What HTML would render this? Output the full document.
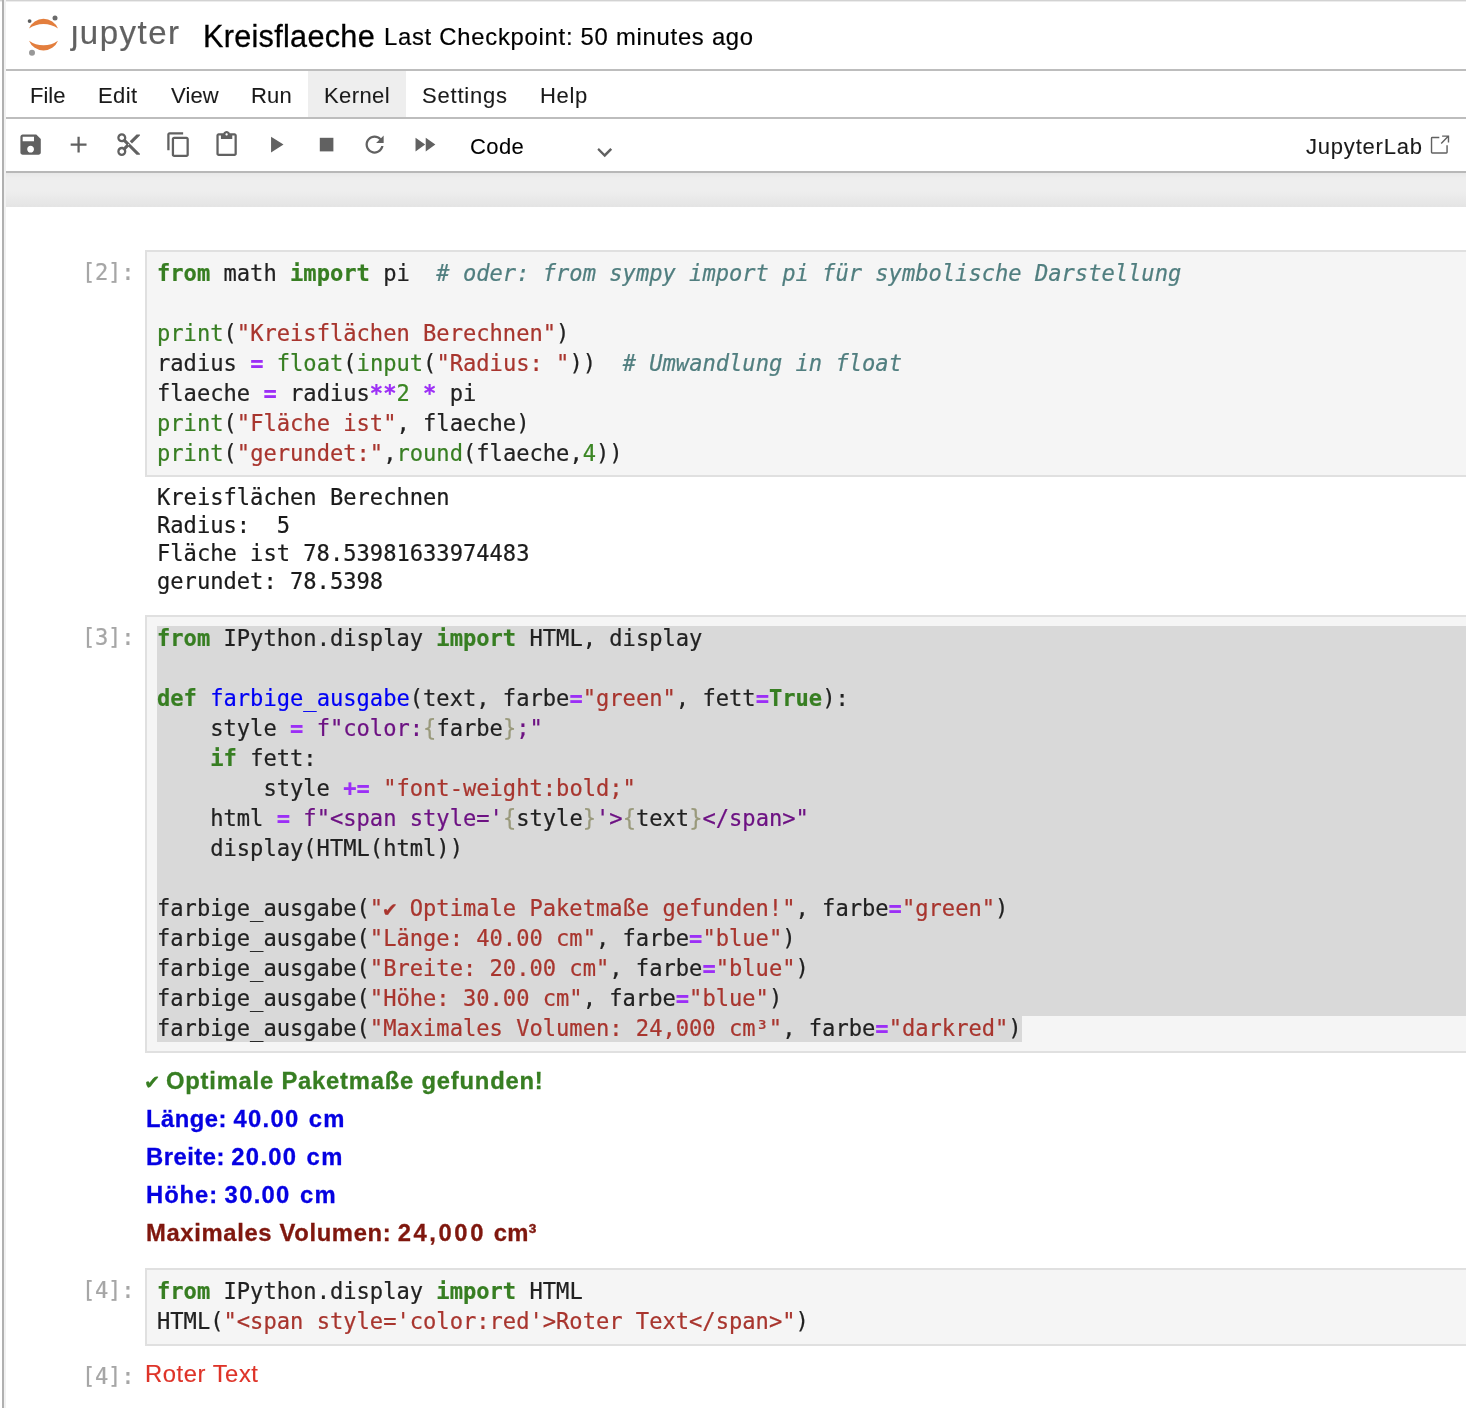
<!DOCTYPE html>
<html lang="de">
<head>
<meta charset="utf-8">
<title>Kreisflaeche</title>
<style>
html,body{margin:0;padding:0;background:#fff;}
body{width:1466px;height:1408px;position:relative;overflow:hidden;font-family:"Liberation Sans",sans-serif;color:#212121;}
.abs{position:absolute;white-space:nowrap;}
.abs,pre,.html{will-change:transform;}
.ui{-webkit-text-stroke:0.1px currentColor;font-family:"Liberation Sans",sans-serif;font-size:22px;line-height:26px;color:#1a1a1a;}
.hline{position:absolute;left:6px;right:0;height:2px;background:#bdbdbd;}
.ico{position:absolute;width:27.2px;height:27.2px;fill:#616161;}
pre{-webkit-text-stroke:0.22px currentColor;margin:0;font-family:"DejaVu Sans Mono","Liberation Mono",monospace;font-size:22.1px;}
.cell{position:absolute;left:145px;right:-4px;background:#f5f5f5;border:2px solid #e0e0e0;box-sizing:border-box;}
.code{position:absolute;left:157.3px;line-height:30px;color:#212121;white-space:pre;}
.out{position:absolute;left:157.3px;line-height:28px;color:#1a1a1a;white-space:pre;}
.prompt{position:absolute;left:81.8px;line-height:30px;color:#a6a6a6;white-space:pre;letter-spacing:-0.25px;margin-top:-0.8px;}
.k{color:#377e22;font-weight:bold;}
.b{color:#377e22;}
.s{color:#a8352e;}
.c{color:#507e7f;font-style:italic;}
.o{color:#9c2ff6;font-weight:bold;}
.n{color:#3b8624;}
.d{color:#0000f5;}
.f{color:#6d1283;}
.br{color:#99997b;}
.sel{position:absolute;background:#d9d9d9;}
.html{-webkit-text-stroke:0.3px currentColor;position:absolute;left:145.6px;margin-top:1px;font-size:23.8px;line-height:38px;font-weight:bold;letter-spacing:0.95px;}
</style>
</head>
<body>
<!-- window edges -->
<div class="abs" style="left:0;top:0;width:1466px;height:1px;background:#d2d2d2;"></div>
<div class="abs" style="left:0;top:1px;width:1466px;height:1px;background:#ececec;"></div>
<div class="abs" style="left:2px;top:0;width:2px;height:1408px;background:#b0b0b0;"></div>
<div class="abs" style="left:4px;top:0;width:2px;height:1408px;background:#f1f1f1;"></div>

<!-- header -->
<svg class="abs" style="left:0;top:0;" width="70" height="64" viewBox="0 0 70 64">
  <path d="M29 28.5 A15.63 15.63 0 0 1 58 28.5 A25.15 25.15 0 0 0 29 28.5 Z" fill="#e37e3d"/>
  <path d="M29 40.7 A15.63 15.63 0 0 0 58 40.7 A25.15 25.15 0 0 1 29 40.7 Z" fill="#e37e3d"/>
  <circle cx="29.6" cy="21.1" r="1.9" fill="#5e5e5e"/>
  <circle cx="55" cy="17.9" r="2.5" fill="#6b6b6b"/>
  <circle cx="32" cy="52.8" r="3" fill="#989898"/>
</svg>
<div class="abs" id="logo" style="left:70.5px;top:12.5px;font-size:33px;line-height:40px;color:#616161;letter-spacing:1.5px;-webkit-text-stroke:0.2px #616161;">jupyter</div>
<div class="abs" style="left:70px;top:17px;width:8px;height:7.5px;background:#fff;"></div>
<div class="abs" id="title" style="left:203px;top:18px;font-size:30.6px;line-height:36px;color:#000;letter-spacing:0.3px;-webkit-text-stroke:0.3px #000;">Kreisflaeche</div>
<div class="abs" id="chk" style="left:383.7px;top:21.5px;font-size:23.8px;line-height:30px;color:#000;letter-spacing:0.75px;-webkit-text-stroke:0.2px #000;">Last Checkpoint: 50 minutes ago</div>
<div class="hline" style="top:69px;"></div>

<!-- menu -->
<div class="abs" style="left:308px;top:71px;width:98px;height:46px;background:#eeeeee;"></div>
<div class="abs ui" id="m1" style="left:30px;top:83px;">File</div>
<div class="abs ui" id="m2" style="left:98px;top:83px;letter-spacing:0.4px;">Edit</div>
<div class="abs ui" id="m3" style="left:170.7px;top:83px;letter-spacing:0.15px;">View</div>
<div class="abs ui" id="m4" style="left:250.8px;top:83px;letter-spacing:0.2px;">Run</div>
<div class="abs ui" id="m5" style="left:324px;top:83px;letter-spacing:0.4px;">Kernel</div>
<div class="abs ui" id="m6" style="left:422px;top:83px;letter-spacing:0.8px;">Settings</div>
<div class="abs ui" id="m7" style="left:539.5px;top:83px;letter-spacing:0.7px;">Help</div>
<div class="hline" style="top:117px;"></div>

<!-- toolbar -->
<svg class="ico" style="left:16.8px;top:131px;" viewBox="0 0 24 24"><path d="M17 3H5c-1.11 0-2 .9-2 2v14c0 1.1.89 2 2 2h14c1.1 0 2-.9 2-2V7l-4-4zm-5 16c-1.66 0-3-1.34-3-3s1.34-3 3-3 3 1.34 3 3-1.34 3-3 3zm3-10H5V5h10v4z"/></svg>
<svg class="ico" style="left:65px;top:131px;" viewBox="0 0 24 24"><path d="M19 13h-6v6h-2v-6H5v-2h6V5h2v6h6v2z"/></svg>
<svg class="ico" style="left:114.9px;top:131px;" viewBox="0 0 24 24"><path d="M9.64 7.64c.23-.5.36-1.05.36-1.64 0-2.21-1.79-4-4-4S2 3.79 2 6s1.79 4 4 4c.59 0 1.14-.13 1.64-.36L10 12l-2.36 2.36C7.14 14.13 6.59 14 6 14c-2.21 0-4 1.79-4 4s1.79 4 4 4 4-1.79 4-4c0-.59-.13-1.14-.36-1.64L12 14l7 7h3v-1L9.64 7.64zM6 8c-1.1 0-2-.89-2-2s.9-2 2-2 2 .89 2 2-.9 2-2 2zm0 12c-1.1 0-2-.89-2-2s.9-2 2-2 2 .89 2 2-.9 2-2 2zm6-7.5c-.28 0-.5-.22-.5-.5s.22-.5.5-.5.5.22.5.5-.22.5-.5.5zM19 3l-6 6 2 2 7-7V3z"/></svg>
<svg class="ico" style="left:164.9px;top:131px;" viewBox="0 0 24 24"><path d="M16 1H4c-1.1 0-2 .9-2 2v14h2V3h12V1zm3 4H8c-1.1 0-2 .9-2 2v14c0 1.1.9 2 2 2h11c1.1 0 2-.9 2-2V7c0-1.1-.9-2-2-2zm0 16H8V7h11v14z"/></svg>
<svg class="ico" style="left:213px;top:131px;" viewBox="0 0 24 24"><path d="M19 2h-4.18C14.4.84 13.3 0 12 0c-1.3 0-2.4.84-2.82 2H5c-1.1 0-2 .9-2 2v16c0 1.1.9 2 2 2h14c1.1 0 2-.9 2-2V4c0-1.1-.9-2-2-2zm-7 0c.55 0 1 .45 1 1s-.45 1-1 1-1-.45-1-1 .45-1 1-1zm7 18H5V4h2v3h10V4h2v16z"/></svg>
<svg class="ico" style="left:262.4px;top:131px;" viewBox="0 0 24 24"><path d="M8 5v14l11-7z"/></svg>
<svg class="ico" style="left:313.2px;top:131px;" viewBox="0 0 24 24"><path d="M6 6h12v12H6z"/></svg>
<svg class="ico" style="left:360.8px;top:131px;" viewBox="0 0 18 18"><path d="M9 13.5c-2.49 0-4.5-2.01-4.5-4.5S6.510 4.500 9 4.500c1.240 0 2.360.52 3.170 1.330L10 8h5V3l-1.760 1.760C12.150 3.680 10.660 3 9 3 5.690 3 3.010 5.690 3.010 9S5.690 15 9 15c2.970 0 5.430-2.160 5.900-5h-1.520c-.46 2-2.240 3.500-4.380 3.500z"/></svg>
<svg class="ico" style="left:410.9px;top:131px;" viewBox="0 0 24 24"><path d="M4 18l8.5-6L4 6v12zm9-12v12l8.500-6L13 6z"/></svg>
<div class="abs ui" id="code" style="left:469.5px;top:134px;color:#000;letter-spacing:0.4px;">Code</div>
<svg class="ico" style="left:591px;top:139px;" viewBox="0 0 18 18"><path d="M5.200,5.900L9,9.700l3.800-3.800l1.200,1.200l-4.900,5l-4.900-5L5.200,5.900z"/></svg>
<div class="abs ui" id="jlab" style="left:1306px;top:134px;letter-spacing:0.8px;">JupyterLab</div>
<svg class="abs" style="left:1428.3px;top:133.7px;fill:#616161;" width="22.6" height="22.6" viewBox="0 0 32 32"><path d="M26,28H6a2.0027,2.0027,0,0,1-2-2V6A2.0027,2.0027,0,0,1,6,4H16V6H6V26H26V16h2V26A2.0027,2.0027,0,0,1,26,28Z"/><polygon points="20 2 20 4 26.586 4 18 12.586 19.414 14 28 5.414 28 12 30 12 30 2 20 2"/></svg>
<div class="abs" style="left:6px;right:0;top:171px;height:2px;background:#b8b8b8;"></div>
<div class="abs" style="left:6px;right:0;top:173px;height:34px;background:linear-gradient(#e8e8e8 0,#eeeeee 5px,#eeeeee 18px,#e4e4e4 100%);"></div>

<!-- cell 2 -->
<pre class="prompt" style="top:258px;">[2]:</pre>
<div class="cell" style="top:250px;height:227px;"></div>
<pre class="code" style="top:258px;"><span class="k">from</span> math <span class="k">import</span> pi  <span class="c"># oder: from sympy import pi für symbolische Darstellung</span>

<span class="b">print</span>(<span class="s">"Kreisflächen Berechnen"</span>)
radius <span class="o">=</span> <span class="b">float</span>(<span class="b">input</span>(<span class="s">"Radius: "</span>))  <span class="c"># Umwandlung in float</span>
flaeche <span class="o">=</span> radius<span class="o">**</span><span class="n">2</span> <span class="o">*</span> pi
<span class="b">print</span>(<span class="s">"Fläche ist"</span>, flaeche)
<span class="b">print</span>(<span class="s">"gerundet:"</span>,<span class="b">round</span>(flaeche,<span class="n">4</span>))</pre>
<pre class="out" style="top:483px;">Kreisflächen Berechnen
Radius:  5
Fläche ist 78.53981633974483
gerundet: 78.5398</pre>

<!-- cell 3 -->
<pre class="prompt" style="top:623px;">[3]:</pre>
<div class="cell" style="top:615px;height:438px;"></div>
<div class="sel" style="left:157px;right:0;top:626px;height:390px;"></div>
<div class="sel" style="left:157px;width:865px;top:1016px;height:26px;"></div>
<pre class="code" style="top:623px;"><span class="k">from</span> IPython.display <span class="k">import</span> HTML, display

<span class="k">def</span> <span class="d">farbige_ausgabe</span>(text, farbe<span class="o">=</span><span class="s">"green"</span>, fett<span class="o">=</span><span class="k">True</span>):
    style <span class="o">=</span> <span class="f">f"color:</span><span class="br">{</span>farbe<span class="br">}</span><span class="f">;"</span>
    <span class="k">if</span> fett:
        style <span class="o">+=</span> <span class="s">"font-weight:bold;"</span>
    html <span class="o">=</span> <span class="f">f"&lt;span style='</span><span class="br">{</span>style<span class="br">}</span><span class="f">'&gt;</span><span class="br">{</span>text<span class="br">}</span><span class="f">&lt;/span&gt;"</span>
    display(HTML(html))

farbige_ausgabe(<span class="s">"✔ Optimale Paketmaße gefunden!"</span>, farbe<span class="o">=</span><span class="s">"green"</span>)
farbige_ausgabe(<span class="s">"Länge: 40.00 cm"</span>, farbe<span class="o">=</span><span class="s">"blue"</span>)
farbige_ausgabe(<span class="s">"Breite: 20.00 cm"</span>, farbe<span class="o">=</span><span class="s">"blue"</span>)
farbige_ausgabe(<span class="s">"Höhe: 30.00 cm"</span>, farbe<span class="o">=</span><span class="s">"blue"</span>)
farbige_ausgabe(<span class="s">"Maximales Volumen: 24,000 cm³"</span>, farbe<span class="o">=</span><span class="s">"darkred"</span>)</pre>
<div class="html" id="h1" style="top:1061px;color:#377e22;"><span style="font-family:'DejaVu Sans',sans-serif;font-size:19.5px;margin-left:-2px;letter-spacing:0;">✔</span><span style="letter-spacing:-1px;"> </span><span style="letter-spacing:0.78px;">Optimale Paketmaße gefunden!</span></div>
<div class="html" id="h2" style="top:1099px;color:#0500e2;"><span style="letter-spacing:0.5px;">Länge:</span><span style="letter-spacing:-0.2px;"> </span><span style="letter-spacing:1.3px;">40.00</span><span style="letter-spacing:2.6px;"> </span><span style="letter-spacing:1.3px;">cm</span></div>
<div class="html" id="h3" style="top:1137px;color:#0500e2;"><span style="letter-spacing:0.5px;">Breite:</span><span style="letter-spacing:-0.2px;"> </span><span style="letter-spacing:1.3px;">20.00</span><span style="letter-spacing:2.6px;"> </span><span style="letter-spacing:1.3px;">cm</span></div>
<div class="html" id="h4" style="top:1175px;color:#0500e2;"><span style="letter-spacing:0.95px;">Höhe:</span><span style="letter-spacing:-0.2px;"> </span><span style="letter-spacing:1.3px;">30.00</span><span style="letter-spacing:2.6px;"> </span><span style="letter-spacing:1.3px;">cm</span></div>
<div class="html" id="h5" style="top:1213px;color:#7f170e;"><span style="letter-spacing:0.65px;">Maximales</span><span style="letter-spacing:0.6px;"> </span><span style="letter-spacing:0.65px;">Volumen:</span><span style="letter-spacing:-0.3px;"> </span><span style="letter-spacing:2.6px;">24,000</span><span style="letter-spacing:1.2px;"> </span><span style="letter-spacing:0.2px;">cm³</span></div>

<!-- cell 4 -->
<pre class="prompt" style="top:1276px;">[4]:</pre>
<div class="cell" style="top:1268px;height:78px;"></div>
<pre class="code" style="top:1276px;"><span class="k">from</span> IPython.display <span class="k">import</span> HTML
HTML(<span class="s">"&lt;span style='color:red'&gt;Roter Text&lt;/span&gt;"</span>)</pre>
<pre class="prompt" style="top:1362px;">[4]:</pre>
<div class="abs" id="rot" style="left:144.7px;top:1355px;font-size:23.8px;line-height:38px;color:#de3328;letter-spacing:0.55px;-webkit-text-stroke:0.15px #de3328;">Roter Text</div>
</body>
</html>
